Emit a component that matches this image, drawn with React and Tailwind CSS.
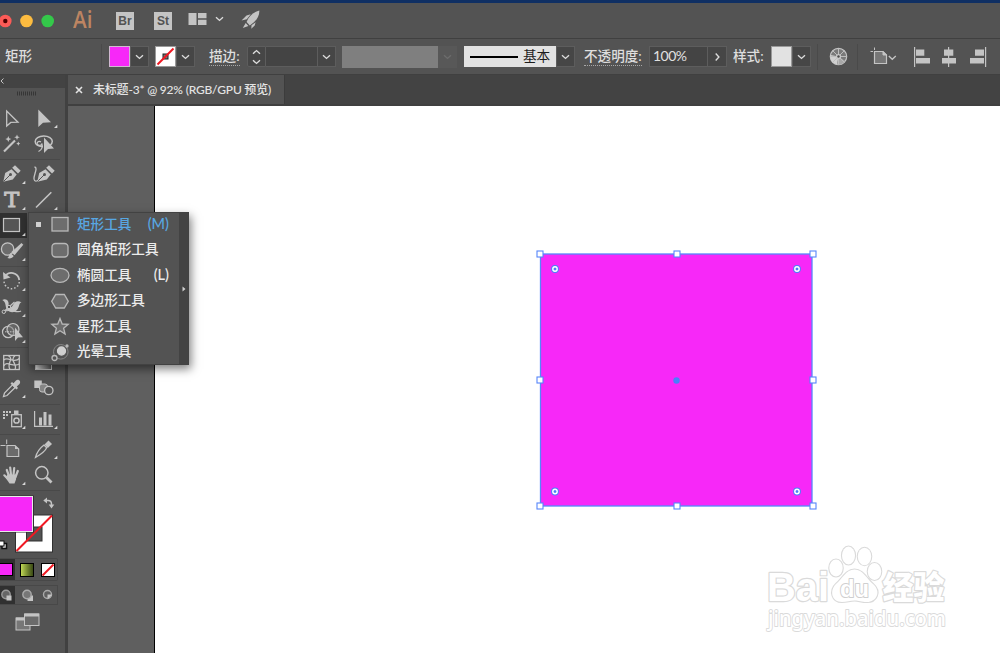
import React from "react";

const FONT = "font-['Lato','Noto_Sans_CJK_SC',sans-serif]";
const L = "#c4c4c4";

function Chevron({ className = "text-[#dcdcdc]" }) {
  return (
    <svg width="9" height="6" viewBox="0 0 9 6" className={className}>
      <path d="M1 1.2 L4.5 4.4 L8 1.2" fill="none" stroke="currentColor" strokeWidth="1.4" />
    </svg>
  );
}

function Drop({ className = "" }) {
  return (
    <div className={"flex h-[21px] w-[19px] items-center justify-center border border-[#5d5d5d] bg-[#464646] " + className}>
      <Chevron />
    </div>
  );
}

function TitleBar() {
  return (
    <div className="flex h-[35px] shrink-0 items-center bg-[#535353]">
      <svg width="56" height="14" viewBox="0 0 56 14" className="shrink-0">
        <circle cx="5.3" cy="7" r="6.3" fill="#fc5b57" />
        <circle cx="5.3" cy="7" r="2.2" fill="#4d0000" />
        <circle cx="26.5" cy="7" r="6.3" fill="#fdbc40" />
        <circle cx="47.7" cy="7" r="6.3" fill="#34c84a" />
      </svg>
      <div className="ml-[17px] w-[22px] -translate-y-[2px] font-['Open_Sans',sans-serif] text-[24px] leading-none font-semibold text-[#bd8562]">
        <span className="inline-block origin-left scale-x-[0.86]">Ai</span>
      </div>
      <div className="ml-[21px] flex h-[18px] w-[18px] items-center justify-center bg-[#c4c4c4] font-['Liberation_Sans',sans-serif] text-[12px] leading-none font-bold text-[#535353]">
        Br
      </div>
      <div className="ml-[20px] flex h-[18px] w-[18px] items-center justify-center bg-[#c4c4c4] font-['Liberation_Sans',sans-serif] text-[12px] leading-none font-bold text-[#535353]">
        St
      </div>
      <svg width="19" height="12" viewBox="0 0 19 12" className="ml-[16px] -translate-y-[2px]" fill={L}>
        <path d="M0.5 0 H8.5 V12 H0.5Z M10 0 H18.5 V5.3 H10Z M10 6.7 H18.5 V12 H10Z" />
      </svg>
      <Chevron className="ml-[8px] -translate-y-[2px] text-[#dcdcdc]" />
      <svg width="19" height="20" viewBox="0 0 19 20" className="ml-[17px] -translate-y-[1px]" fill={L}>
        <path d="M18.3 0.6 C18.5 5 16.5 9 12.6 12.4 L8.8 15.4 L5.6 12 C7.5 6.5 12.5 2 18.3 0.6Z" />
        <path d="M9.7 4.2 L5.5 5.4 L0.5 10.6 L5.8 9.2Z M14.6 12.2 L13.7 15.4 L10.3 18.8 L10.5 15.2Z M4.7 13 L1.8 18 L7.4 16Z" />
      </svg>
    </div>
  );
}

function Label({ children, className = "", dotted = false }) {
  return (
    <div className={"whitespace-nowrap text-[13.6px] leading-[19px] font-medium text-[#dedede] " + className}>
      <span className={dotted ? "block h-[19px] border-b border-dotted border-[#a8a8a8]" : "block h-[19px]"}>{children}</span>
    </div>
  );
}

function ControlBar() {
  return (
    <div className="flex h-[36px] shrink-0 items-center border-t border-[#404040] bg-[#535353]">
      <Label className="ml-[5px] w-[96px]">矩形</Label>
      <div className="h-[26px] w-px bg-[#4a4a4a]" />
      <div className="ml-[7px] h-[21px] w-[21px] border border-[#d0b8d0] bg-[#f728f8]" />
      <Drop />
      <svg width="21" height="21" viewBox="0 0 21 21" className="ml-[6px]">
        <rect x="0.5" y="0.5" width="20" height="20" fill="#fff" stroke="#9a9a9a" />
        <rect x="8" y="8" width="5" height="5" fill="#777" stroke="#222" />
        <path d="M2.5 18.5 L18.5 2.5" stroke="#f01822" strokeWidth="2" />
      </svg>
      <Drop />
      <Label dotted className="ml-[14px] w-[31px]">描边:</Label>
      <div className="ml-[7px] flex h-[21px] w-[19px] flex-col items-center justify-center gap-[4px] rounded-l-[2px] border border-[#5d5d5d] bg-[#464646]">
        <Chevron className="rotate-180 text-[#dcdcdc]" />
        <Chevron />
      </div>
      <div className="h-[21px] w-[51px] border-y border-[#5d5d5d] bg-[#444444]" />
      <Drop />
      <div className="ml-[6px] h-[22px] w-[96px] bg-[#7f7f7f]" />
      <div className="flex h-[22px] w-[19px] items-center justify-center bg-[#585858]">
        <Chevron className="text-[#6c6c6c]" />
      </div>
      <div className="ml-[7px] flex h-[21px] w-[92px] items-center bg-[#e2e2e2] text-[13.6px] leading-[19px] text-[#1c1c1c]">
        <div className="ml-[6px] h-[2px] w-[48px] bg-black" />
        <span className="ml-[5px]">基本</span>
      </div>
      <Drop />
      <Label dotted className="ml-[9px] w-[58px]">不透明度:</Label>
      <div className="ml-[7px] flex h-[21px] w-[59px] items-center border border-[#5d5d5d] bg-[#444444] pb-[2px] pl-[3px] text-[14px] leading-none tracking-[-0.5px] text-[#e0e0e0]">
        100%
      </div>
      <div className="flex h-[21px] w-[19px] items-center justify-center border border-l-0 border-[#5d5d5d] bg-[#464646]">
        <Chevron className="-rotate-90 text-[#dcdcdc]" />
      </div>
      <Label className="ml-[6px] w-[31px]">样式:</Label>
      <div className="ml-[7px] h-[21px] w-[21px] border border-[#999] bg-[#e2e2e2]" />
      <Drop />
      <div className="ml-[6px] h-[26px] w-px bg-[#4a4a4a]" />
      <svg width="19" height="19" viewBox="0 0 19 19" className="ml-[11px]">
        <circle cx="9.5" cy="9.5" r="8.2" fill="#7a7a7a" stroke={L} strokeWidth="1.2" />
        <path d="M9.5 9.5 L1.5 8 A8 8 0 0 0 8 17.5Z" fill="#d0d0d0" />
        <path d="M9.5 9.5 L8 17.5 A8 8 0 0 0 16 14Z" fill="#a8a8a8" />
        <path d="M9.5 1.5 V17.5 M1.5 9.5 H17.5 M3.8 3.8 L15.2 15.2 M15.2 3.8 L3.8 15.2" stroke="#bdbdbd" strokeWidth="1" />
        <circle cx="9.5" cy="9.5" r="2.6" fill="#c8c8c8" />
        <circle cx="9.5" cy="9.5" r="1.2" fill="#4a4a4a" />
      </svg>
      <div className="ml-[9px] h-[26px] w-px bg-[#4a4a4a]" />
      <svg width="27" height="18" viewBox="0 0 27 18" className="mb-[2px] ml-[12px]" fill="none" stroke={L}>
        <path d="M4.5 4.5 H13 L16.5 8 V16.5 H4.5Z" fill="#777" strokeWidth="1.2" />
        <path d="M13 4.5 V8 H16.5Z" fill={L} />
        <path d="M0.5 4.5 H3 M4.5 0.5 V3" />
        <path d="M18.8 9 L22.3 12.3 L25.8 9" strokeWidth="1.3" />
      </svg>
      <svg width="74" height="20" viewBox="0 0 74 20" className="ml-[17px]" fill={L}>
        <path d="M0 0 H1.2 V20 H0Z M2 2.500 H10.300 V8.700 H2Z M2 11 H16 V16.500 H2Z" />
        <path d="M34 0 H35.200 V20 H34Z M30 2.500 H39.300 V8.700 H30Z M28 11 H42 V16.500 H28Z" />
        <path d="M71 0 H72.200 V20 H71Z M61 2.500 H70 V8.700 H61Z M56 11 H70 V16.500 H56Z" />
      </svg>
    </div>
  );
}

const nib = (
  <>
    <path d="M3.3 20.7 L5.2 12 L11.5 8.3 L16.7 13.600 L12.800 18.600Z" fill={L} />
    <path d="M3.500 20.500 L10 14" stroke="#535353" strokeWidth="1" />
    <circle cx="10.500" cy="13.500" r="1.500" fill="#535353" />
    <path d="M12.200 6.800 L15 4.300 L20.700 9.800 L18 12.600Z" fill={L} />
  </>
);

const icons = {
  direct: <path d="M6.7 6 V21 L10.800 17.400 L18 17.200Z" fill="none" stroke={L} strokeWidth="1.300" />,
  select: <path d="M6.300 4.500 V22 L11 17.800 L19 17.300Z" fill={L} />,
  wand: (
    <>
      <path d="M4 20.500 L15 9.500" stroke={L} strokeWidth="2.200" />
      <path d="M8.300 5 L9.200 7.200 L11.300 8 L9.200 8.900 L8.300 11 L7.400 8.900 L5.300 8 L7.400 7.200Z M17 3.500 L17.800 5.500 L19.800 6.300 L17.800 7.100 L17 9 L16.200 7.100 L14.200 6.300 L16.200 5.500Z M18.300 10.500 L19 12 L20.300 12.600 L19 13.200 L18.300 14.700 L17.600 13.200 L16.200 12.600 L17.600 12Z" fill={L} />
    </>
  ),
  lasso: (
    <>
      <path d="M11 15.500 C6 15.800 3.200 13.500 3.200 10.500 C3.200 7.500 6.800 5 11.700 5 C16.700 5 20.300 7.300 20.300 10.300 C20.300 12 19.500 13.500 18 14.500" fill="none" stroke={L} strokeWidth="1.500" />
      <path d="M9 10.800 C6.500 9.500 4.800 11 5.300 13 C6 15.300 9.800 14.800 9.800 12.500 C11 16 9.500 19 6.500 20.500" fill="none" stroke={L} strokeWidth="1.300" />
      <path d="M12 6.500 V22 L16 18 L22 17.500Z" fill={L} />
    </>
  ),
  pen: nib,
  curvature: (
    <>
      <g transform="translate(2 0)">{nib}</g>
      <path d="M2.500 6 C6.500 6.500 1.500 14 2 18 C2.500 21 5 20.500 6 19" fill="none" stroke={L} strokeWidth="1.300" />
    </>
  ),
  type: (
    <text x="11.700" y="19.500" textAnchor="middle" fontFamily="DejaVu Serif" fontWeight="400" fontSize="19.500" textLength="15" lengthAdjust="spacingAndGlyphs" fill={L} stroke={L} strokeWidth="0.900">T</text>
  ),
  line: <path d="M4 20.500 L19.300 5.200" stroke={L} strokeWidth="1.600" />,
  rect: <rect x="3.500" y="5.500" width="16" height="13" fill="#555" stroke={L} strokeWidth="1.200" />,
  brush: (
    <>
      <circle cx="7.600" cy="11" r="6.200" fill="#6b6b6b" stroke={L} strokeWidth="1.300" />
      <path d="M21.500 5 L23.300 6.800 L14.500 17.300 L11.200 14.300Z" fill={L} />
      <path d="M10.500 15 L13.700 18 C12.500 20.500 9.500 20.800 7.300 20 C9.300 18.800 8.800 16.500 10.500 15Z" fill={L} />
    </>
  ),
  rotate: (
    <>
      <path d="M5 8.500 C8.500 3 18 3.800 19.300 12" fill="none" stroke={L} strokeWidth="1.800" />
      <path d="M19.300 14 C18 23 5 23 4 13.500" fill="none" stroke={L} strokeWidth="1.500" strokeDasharray="1.500 2" />
      <path d="M3 4 L3.500 11.500 L10.500 9.500Z" fill={L} />
    </>
  ),
  width: (
    <>
      <path d="M2.300 6 C6 3.500 9.500 7 8.500 11 C8 14 11.500 14.500 13 11 C14.500 7.500 18 6 21.500 8.500 C18.500 9 19.500 13.500 17 16 C13.500 19.500 9.500 18.500 7 15.500 C5 13 6.500 8 2.300 6Z" fill={L} />
      <path d="M3.500 18 L14.500 8 M2.500 18.500 C8 13 17 20 21 17" fill="none" stroke={L} strokeWidth="1.200" />
      <circle cx="3.800" cy="17.800" r="1.700" fill="#535353" stroke={L} />
      <circle cx="9" cy="13" r="1.700" fill="#535353" stroke={L} />
    </>
  ),
  builder: (
    <>
      <circle cx="8.200" cy="12" r="5.700" fill="none" stroke={L} strokeWidth="1.200" />
      <circle cx="13" cy="9.500" r="6" fill="#777" fillOpacity="0.500" stroke={L} strokeWidth="1.200" />
      <path d="M5 11.800 H15" stroke={L} strokeDasharray="1.500 1" />
      <path d="M15 7.500 V21 L18 17.500 L23 17.300Z" fill={L} />
    </>
  ),
  mesh: (
    <>
      <rect x="3.700" y="6.500" width="15.600" height="14" fill="none" stroke={L} strokeWidth="1.300" />
      <path d="M8 6.500 C15 10 6 14 10 20.500 M15 6.500 C9 12 18 15 15 20.500 M3.700 11 C8 7 14 15 19.300 9.500 M3.700 17 C7 11 13 19 19.300 15" fill="none" stroke={L} strokeWidth="1.300" />
    </>
  ),
  gradient: (
    <>
      <defs>
        <linearGradient id="toolGradient"><stop stopColor="#eee" /><stop offset="1" stopColor="#555" /></linearGradient>
      </defs>
      <rect x="3.500" y="6.500" width="16" height="14" fill="url(#toolGradient)" stroke={L} />
    </>
  ),
  dropper: (
    <>
      <path d="M3.500 21.500 L4.500 18 L12.500 9.800 L15.200 12.500 L7 20.500Z" fill="none" stroke={L} strokeWidth="1.300" />
      <path d="M10.500 8.500 L12 7 L13.500 8.300 L16 5.500 C18.500 3.500 21.500 6.500 19.500 9 L16.800 11.500 L18 13 L16.500 14.500Z" fill={L} />
    </>
  ),
  blend: (
    <>
      <rect x="2.300" y="5.500" width="7.500" height="7.500" fill={L} />
      <rect x="7.500" y="9" width="8" height="8" rx="2.500" fill="#858585" stroke={L} />
      <circle cx="16.800" cy="15.500" r="4.200" fill="#535353" stroke={L} strokeWidth="1.300" />
    </>
  ),
  spray: (
    <>
      <path d="M3 5 h2 v2 h-2z M6 5 h2 v2 h-2z M9 5 h2 v2 h-2z M3 8 h2 v2 h-2z M6 8 h2 v2 h-2z M3 11 h2 v2 h-2z M14 4.500 h4.500 v3.500 h-4.500z" fill={L} />
      <rect x="11.700" y="8.700" width="9.600" height="12" fill="none" stroke={L} strokeWidth="1.300" />
      <circle cx="16.500" cy="14.500" r="2.600" fill="none" stroke={L} strokeWidth="1.500" />
    </>
  ),
  chart: (
    <>
      <path d="M2.600 5 V20.300 H21" fill="none" stroke={L} strokeWidth="1.200" />
      <path d="M7 11.500 h3 v8 h-3z M11.500 6 h3 v13.500 h-3z M16.500 8.500 h3 v11 h-3z" fill={L} />
    </>
  ),
  artboard: (
    <>
      <path d="M7 9.500 H15 L18.700 13 V20.500 H7Z" fill="#6b6b6b" stroke={L} strokeWidth="1.200" />
      <path d="M15 9.500 V13 H18.700Z" fill={L} />
      <path d="M0.500 9.500 H5.500 M6.700 3.500 V8" stroke={L} />
    </>
  ),
  slice: (
    <>
      <path d="M3.500 21.500 C5 15.500 8 12 12 9 L14.700 11.700 C13 15.500 8.500 18.500 3.500 21.500Z" fill="none" stroke={L} strokeWidth="1.300" />
      <path d="M12.500 8.500 L16.500 4.500 L20 8 L15.800 12Z" fill={L} />
    </>
  ),
  hand: (
    <>
      <path d="M6.800 8 L9 14 M10.200 5.500 L11 13 M14.200 6 L13.500 13 M17.800 9 L15.500 15 M4.300 13.300 L8.500 17.500" stroke={L} strokeWidth="2.200" strokeLinecap="round" />
      <path d="M7.500 12.500 H16.500 L16 17.500 L14.500 21.500 H9.500 L5.500 15.500Z" fill={L} />
    </>
  ),
  zoom: (
    <>
      <circle cx="9.800" cy="10.800" r="6.200" fill="none" stroke={L} strokeWidth="1.500" />
      <path d="M14.500 15.500 L19.500 20.500" stroke={L} strokeWidth="2.800" />
    </>
  ),
};

function Tool({ name, corner = false, active = false }) {
  return (
    <div className={active ? "w-[27px] bg-[#303030]" : "w-[28px]"}>
      <svg width="28" height="25" viewBox="0 0 28 25" className="block overflow-visible">
        {name ? icons[name] : null}
        {corner && <path d="M25.300 19.800 V23 H22Z" fill="#d8d8d8" />}
      </svg>
    </div>
  );
}

function Row({ children, short = false }) {
  return <div className={short ? "flex h-[25px] gap-[4px]" : "flex h-[26px] gap-[4px]"}>{children}</div>;
}

function Rule() {
  return (
    <div className="flex h-[4px] items-center">
      <div className="h-px w-[60px] bg-[#494949]" />
    </div>
  );
}

function ToolPanel() {
  return (
    <div className="flex w-[68px] shrink-0 flex-col border-r-[3px] border-[#414141] bg-[#535353]">
      <div className="h-[13px] w-full bg-[#434343]">
        <svg width="6" height="13" viewBox="0 0 6 13"><path d="M3.500 3.500 L1 6 L3.500 8.500" fill="none" stroke="#c4c4c4" /></svg>
      </div>
      <div className="h-[17px] pt-[3px] pl-[17px]">
        <svg width="20" height="5" viewBox="0 0 20 5" className="block">
          <path d="M0 2.500 H20" stroke="#363636" strokeWidth="4" strokeDasharray="1 1" />
        </svg>
      </div>
      <Row><Tool name="direct" /><Tool name="select" corner /></Row>
      <Row><Tool name="wand" /><Tool name="lasso" /></Row>
      <Rule />
      <Row><Tool name="pen" corner /><Tool name="curvature" /></Row>
      <Row><Tool name="type" corner /><Tool name="line" corner /></Row>
      <Row short><Tool name="rect" corner active /></Row>
      <Row><Tool name="brush" corner /></Row>
      <Rule />
      <Row><Tool name="rotate" corner /></Row>
      <Row><Tool name="width" corner /></Row>
      <Row short><Tool name="builder" corner /></Row>
      <Rule />
      <Row><Tool name="mesh" /><Tool name="gradient" /></Row>
      <Row><Tool name="dropper" corner /><Tool name="blend" /></Row>
      <div className="h-px" />
      <Rule />
      <Row><Tool name="spray" corner /><Tool name="chart" corner /></Row>
      <Rule />
      <Row><Tool name="artboard" /><Tool name="slice" corner /></Row>
      <Row><Tool name="hand" corner /><Tool name="zoom" /></Row>
      <Rule />
      <svg width="64" height="64" viewBox="0 492 64 64" className="block">
        <rect x="15.500" y="515" width="37" height="37" fill="#fff" stroke="#303030" />
        <rect x="26.500" y="527" width="15.500" height="14" fill="#535353" stroke="#303030" />
        <path d="M16.500 551 L52 515.500" stroke="#f01822" strokeWidth="2" />
        <rect x="-1" y="496" width="34.500" height="36" fill="#f728f8" stroke="#303030" />
        <rect x="-1" y="496.500" width="33.500" height="35" fill="#f728f8" stroke="#e8e8e8" />
        <path d="M46 500.500 H48 Q51.500 500.500 51.500 504 V505" fill="none" stroke={L} strokeWidth="1.500" />
        <path d="M43.300 500.500 L47 497.500 V503.500Z M48.700 504.500 H54.300 L51.500 508.500Z" fill={L} />
        <rect x="2" y="543.500" width="4.500" height="5" fill="#ddd" stroke="#111" strokeWidth="1.500" />
        <rect x="-1" y="541" width="5" height="5" fill="#fff" stroke="#111" />
      </svg>
      <div className="mt-[2px] flex h-[23px] w-[58px] items-center rounded-r-[2px] border border-l-0 border-[#484848]">
        <div className="flex h-full w-[15px] items-center bg-[#303030]">
          <div className="h-[13px] w-[13px] border border-l-0 border-black bg-[#f728f8]" />
        </div>
        <div className="ml-[5px] h-[14px] w-[14px] border border-black bg-linear-to-r from-[#c0d855] to-[#3a4a15]" />
        <svg width="14" height="14" viewBox="0 0 14 14" className="ml-[7px]">
          <rect x="0.500" y="0.500" width="13" height="13" fill="#fff" stroke="#000" />
          <path d="M1.500 12.500 L12.500 1.500" stroke="#f01822" strokeWidth="2" />
        </svg>
      </div>
      <div className="mt-[4px] flex h-[20px] w-[58px] items-center border border-l-0 border-[#484848]">
        <div className="flex h-full w-[15px] items-center bg-[#303030]">
          <svg width="14" height="14" viewBox="0 0 14 14">
            <circle cx="6" cy="6.500" r="4.200" fill="#666" stroke="#999" strokeWidth="1.400" />
            <rect x="6.500" y="7.500" width="5" height="5" fill={L} />
          </svg>
        </div>
        <svg width="14" height="14" viewBox="0 0 14 14" className="ml-[6px]">
          <rect x="6.500" y="7.500" width="5.500" height="5.500" fill={L} />
          <circle cx="6" cy="6.500" r="4.200" fill="#777" stroke="#aaa" strokeWidth="1.400" />
        </svg>
        <svg width="14" height="14" viewBox="0 0 14 14" className="ml-[6px]">
          <circle cx="6.500" cy="6.500" r="4" fill="#606060" stroke="#aaa" strokeWidth="1.400" />
          <path d="M6.500 6.500 h4 v1 l-3 3 h-1z" fill={L} />
        </svg>
      </div>
      <svg width="26" height="18" viewBox="0 0 26 18" className="mt-[8px] ml-[15px]">
        <rect x="1" y="5" width="14" height="12" fill="#777" stroke={L} />
        <rect x="1" y="4.500" width="14" height="3" fill={L} />
        <rect x="9.500" y="1" width="14.500" height="11.500" fill="#6b6b6b" stroke={L} />
        <rect x="9.500" y="0.500" width="14.500" height="3" fill={L} />
      </svg>
    </div>
  );
}

const shapes = {
  rect: <rect x="2" y="2.500" width="16" height="13.500" />,
  round: <rect x="2" y="2.500" width="16" height="13.500" rx="3.500" />,
  ellipse: <ellipse cx="10" cy="9.300" rx="9" ry="7" />,
  hex: <path d="M5.700 2.500 H14.300 L18.300 9.300 L14.300 16 H5.700 L1.700 9.300Z" />,
  star: <path d="M10 1.500 L12.200 7 L18.200 7.300 L13.600 11.200 L15.100 17 L10 13.700 L4.900 17 L6.400 11.200 L1.800 7.300 L7.800 7Z" />,
  flare: (
    <>
      <circle cx="10.800" cy="8.800" r="7.300" fill="none" stroke="#858585" strokeWidth="1" />
      <circle cx="11.500" cy="8" r="4" fill="#d0d0d0" stroke="#d0d0d0" />
      <circle cx="17" cy="3" r="1" fill="#d0d0d0" />
      <circle cx="4.500" cy="15" r="2.500" fill="#535353" />
    </>
  ),
};

const items = [
  ["rect", "矩形工具", "(M)"],
  ["round", "圆角矩形工具", ""],
  ["ellipse", "椭圆工具", "(L)"],
  ["hex", "多边形工具", ""],
  ["star", "星形工具", ""],
  ["flare", "光晕工具", ""],
];

function ShapeMenu() {
  return (
    <div className="absolute top-[212px] left-[28px] flex h-[153px] w-[161px] border border-[#424242] bg-[#535353] shadow-[2px_4px_9px_rgba(0,0,0,0.5)]">
      <div className="-mt-px flex flex-1 flex-col">
        {items.map(([shape, label, key], i) => (
          <div key={shape} className={"flex h-[25.5px] shrink-0 items-center text-[13.6px] leading-none font-medium " + (i === 0 ? "text-[#58a7e2]" : "text-[#ececec]")}>
            <div className={"ml-[7px] h-[5px] w-[5px] " + (i === 0 ? "bg-[#d0d0d0]" : "")} />
            <svg width="20" height="19" viewBox="0 0 20 19" className="ml-[9px]" fill="#6d6d6d" stroke="#b8b8b8" strokeWidth="1.300">
              {shapes[shape]}
            </svg>
            <span className="ml-[7px] whitespace-nowrap">{label}</span>
            <span className="mr-[10px] ml-auto pb-[2px] text-[14.500px]">{key}</span>
          </div>
        ))}
      </div>
      <div className="flex w-[9px] items-center justify-center bg-[#434343]">
        <svg width="4" height="6" viewBox="0 0 4 6"><path d="M0.500 0.500 L3.500 3 L0.500 5.500Z" fill="#d0d0d0" /></svg>
      </div>
    </div>
  );
}

const handles = [
  [540, 254], [677, 254], [813, 254],
  [540, 380], [813, 380],
  [540, 506], [677, 506], [813, 506],
];
const radii = [[555, 269], [797, 269], [555, 491.5], [797, 491.5]];

function Artboard() {
  return (
    <svg width="845" height="547" viewBox="155 106 845 547" className="block">
      <rect x="540.500" y="254" width="271.500" height="252" fill="#f728f8" stroke="#5686fa" strokeWidth="1.300" />
      {handles.map(([x, y]) => (
        <rect key={x + "-" + y} x={x - 3} y={y - 3} width="6" height="6" fill="#fff" stroke="#5686fa" strokeWidth="1.100" />
      ))}
      {radii.map(([x, y]) => (
        <g key={x + "-" + y}>
          <circle cx={x} cy={y} r="3.900" fill="#4a80fa" />
          <circle cx={x} cy={y} r="2.200" fill="#4a80fa" stroke="#fff" strokeWidth="1.400" />
        </g>
      ))}
      <circle cx="676.500" cy="380.500" r="3.200" fill="#4a80fa" />
      <g fill="#fff" stroke="#dadada" strokeWidth="2.400" paintOrder="stroke" strokeLinejoin="round">
        <text x="767" y="601" fontFamily="Liberation Sans" fontWeight="700" fontSize="40" textLength="62" lengthAdjust="spacingAndGlyphs">Bai</text>
        <ellipse cx="836" cy="568" rx="6.700" ry="8.500" strokeWidth="2.200" />
        <ellipse cx="848.500" cy="555.500" rx="6.500" ry="9" strokeWidth="2.200" />
        <ellipse cx="864.500" cy="556.500" rx="6.700" ry="8.700" strokeWidth="2.200" />
        <ellipse cx="874.500" cy="571.500" rx="6.700" ry="8.500" strokeWidth="2.200" />
        <path d="M854.500 569.500 C863 569.500 867 579 873 584 C882 592 876 602 867 602 C861 602 859 600.500 854.500 600.500 C850 600.500 847 602 842 602 C832 602 829 591 836 584 C842 579 846 569.500 854.500 569.500Z" strokeWidth="2.200" />
        <text x="840" y="597" fontFamily="Liberation Sans" fontWeight="700" fontSize="24" textLength="29" lengthAdjust="spacingAndGlyphs" stroke="#cfcfcf" strokeWidth="2">du</text>
        <text x="882.500" y="599" fontFamily="Noto Sans CJK SC" fontWeight="900" fontSize="32" textLength="62" lengthAdjust="spacingAndGlyphs">经验</text>
        <text x="768" y="625.500" fontFamily="Noto Sans" fontWeight="500" fontSize="21" textLength="178" lengthAdjust="spacingAndGlyphs" strokeWidth="1.800">jingyan.baidu.com</text>
      </g>
    </svg>
  );
}

export default function App() {
  return (
    <div className={"relative flex h-[653px] w-[1000px] flex-col overflow-hidden bg-[#535353] " + FONT}>
      <div className="h-[3px] shrink-0 bg-[#0f2f63]" />
      <TitleBar />
      <ControlBar />
      <div className="flex min-h-0 flex-1 border-t border-[#404040]">
        <ToolPanel />
        <div className="flex min-w-0 flex-1 flex-col">
          <div className="flex h-[31px] shrink-0 border-b-2 border-[#404040] bg-[#434343]">
            <div className="flex w-[217px] items-center border-r border-[#3c3c3c] bg-[#535353] text-[12px] leading-none font-medium text-[#e4e4e4]">
              <svg width="8" height="8" viewBox="0 0 8 8" className="ml-[7px]"><path d="M1 1 L7 7 M7 1 L1 7" stroke="#e4e4e4" strokeWidth="1.600" /></svg>
              <span className="ml-[10px] whitespace-nowrap pt-px tracking-[-0.2px]">未标题-3* @ 92% (RGB/GPU 预览)</span>
            </div>
          </div>
          <div className="flex min-h-0 flex-1">
            <div className="w-[87px] shrink-0 border-r border-black bg-[#5f5f5f]" />
            <div className="flex-1 bg-white">
              <Artboard />
            </div>
          </div>
        </div>
      </div>
      <ShapeMenu />
    </div>
  );
}
